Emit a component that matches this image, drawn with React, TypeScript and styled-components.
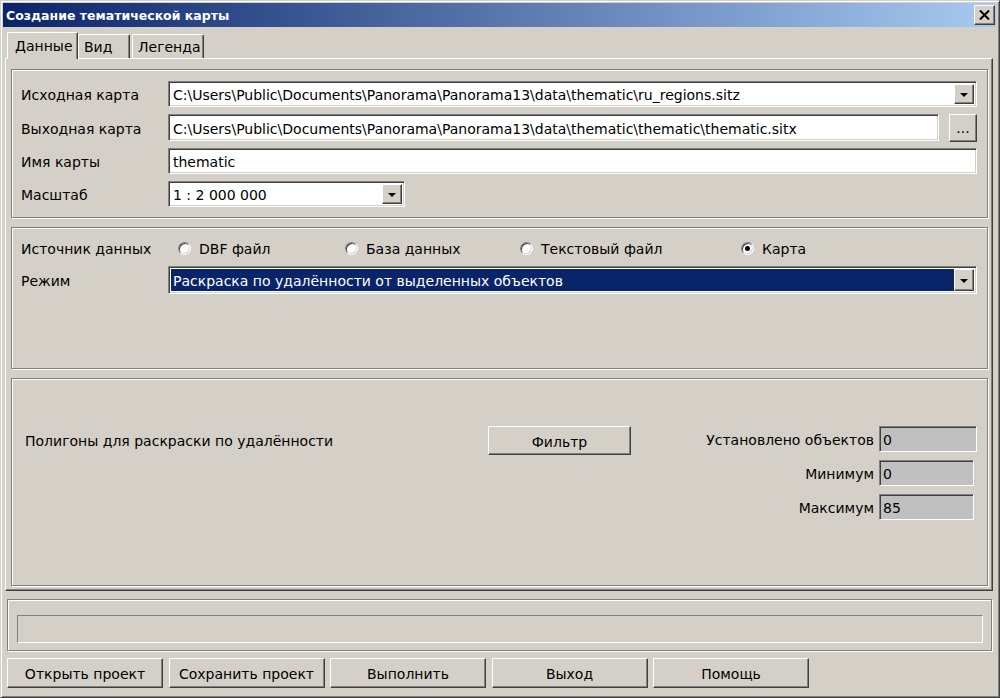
import styled, { createGlobalStyle } from "styled-components";

const GlobalStyle = createGlobalStyle`
  html, body { margin: 0; padding: 0; background: #d4d0c8; }
  body {
    font-family: "DejaVu Sans", Verdana, sans-serif;
    font-size: 14px;
    color: #000;
  }
  * { box-sizing: border-box; }
`;

const raised = `
  border: 1px solid;
  border-color: #fff #404040 #404040 #fff;
  box-shadow: inset -1px -1px 0 #808080, inset 1px 1px 0 #d4d0c8;
  background: #d4d0c8;
`;

const sunken = `
  border: 1px solid;
  border-color: #808080 #fff #fff #808080;
  box-shadow: inset 1px 1px 0 #404040, inset -1px -1px 0 #d4d0c8;
`;

const Window = styled.div`
  width: 1000px;
  height: 698px;
  background: #d4d0c8;
  border: 1px solid;
  border-color: #d4d0c8 #404040 #404040 #d4d0c8;
  box-shadow: inset 1px 1px 0 #fff, inset -1px -1px 0 #808080;
  padding: 2px 3px 0 2px;
  display: flex;
  flex-direction: column;
`;

const TitleBar = styled.div`
  height: 24px;
  display: flex;
  align-items: center;
  justify-content: space-between;
  background: linear-gradient(to right, #0a246a, #a6caf0);
  padding: 0 1px 0 3px;
`;

const TitleText = styled.span`
  color: #fff;
  font-weight: bold;
  font-size: 12.5px;
  padding-top: 1px;
`;

const CloseButton = styled.div`
  ${raised}
  width: 21px;
  height: 20px;
  display: flex;
  align-items: center;
  justify-content: center;
`;

const TabStrip = styled.div`
  margin-top: 5px;
  height: 26px;
  display: flex;
  align-items: flex-end;
  padding-left: 4px;
  position: relative;
  z-index: 1;
`;

const Tab = styled.div<{ $active?: boolean; $width: number; $pad: number }>`
  width: ${(p) => p.$width}px;
  height: ${(p) => (p.$active ? 27 : 24)}px;
  margin-bottom: ${(p) => (p.$active ? -1 : 0)}px;
  margin-right: ${(p) => (p.$active ? 0 : 2)}px;
  padding-left: ${(p) => p.$pad}px;
  padding-top: ${(p) => (p.$active ? 5 : 4)}px;
  background: #d4d0c8;
  border-top: 1px solid #fff;
  border-left: 1px solid #fff;
  border-right: 1px solid #404040;
  border-top-left-radius: 2px;
  border-top-right-radius: 2px;
  box-shadow: inset -1px 0 0 #808080;
  white-space: nowrap;
`;

const TabPage = styled.div`
  margin-left: 2px;
  width: 988px;
  height: 533px;
  border: 1px solid;
  border-color: #fff #404040 #404040 #fff;
  box-shadow: inset -1px -1px 0 #808080;
  padding: 10px 4px 0 5px;
  display: flex;
  flex-direction: column;
  gap: 9px;
`;

const Group = styled.div<{ $height: number }>`
  height: ${(p) => p.$height}px;
  border: 1px solid #808080;
  box-shadow: inset 1px 1px 0 #fff, 1px 1px 0 #fff;
`;

const FormGroup = styled(Group)`
  padding: 11px 10px 0 9px;
  display: flex;
  flex-direction: column;
  gap: 7px;
`;

const SourceGroup = styled(Group)`
  padding: 10px 10px 0 9px;
  display: flex;
  flex-direction: column;
  gap: 8px;
`;

const Row = styled.div<{ $height?: number }>`
  display: flex;
  align-items: center;
  height: ${(p) => p.$height ?? 26}px;
`;

const Label = styled.div`
  width: 147px;
  flex: none;
  padding-top: 2px;
  white-space: nowrap;
`;

const Field = styled.div<{ $width?: number }>`
  ${sunken}
  height: 100%;
  width: ${(p) => (p.$width ? `${p.$width}px` : "auto")};
  flex: ${(p) => (p.$width ? "none" : "1")};
  background: #fff;
  display: flex;
  align-items: stretch;
  padding: 2px;
  white-space: nowrap;
  overflow: hidden;
`;

const FieldText = styled.div<{ $selected?: boolean }>`
  flex: 1;
  display: flex;
  align-items: center;
  padding: 2px 0 0 2px;
  background: ${(p) => (p.$selected ? "#0a246a" : "transparent")};
  color: ${(p) => (p.$selected ? "#fff" : "#000")};
  overflow: hidden;
`;

const DropButton = styled.div`
  ${raised}
  width: 20px;
  flex: none;
  display: flex;
  align-items: center;
  justify-content: center;
`;

const Arrow = styled.div`
  width: 0;
  height: 0;
  border-left: 4px solid transparent;
  border-right: 4px solid transparent;
  border-top: 4px solid #000;
  margin-top: 1px;
`;

const EllipsisButton = styled.div`
  ${raised}
  width: 28px;
  height: 28px;
  margin-left: 10px;
  flex: none;
  display: flex;
  align-items: flex-end;
  justify-content: center;
  padding-bottom: 6px;
  line-height: 1;
`;

const RadioItem = styled.div<{ $width: number }>`
  width: ${(p) => p.$width}px;
  flex: none;
  display: flex;
  align-items: center;
  gap: 8px;
  white-space: nowrap;
  padding-top: 2px;
`;

const RadioCircle = styled.div<{ $checked?: boolean }>`
  width: 13px;
  height: 13px;
  margin-top: -2px;
  border-radius: 50%;
  border: 1px solid;
  border-color: #808080 #fff #fff #808080;
  box-shadow: inset 1px 1px 0 #404040, inset -1px -1px 0 #d4d0c8;
  background: #fff;
  display: flex;
  align-items: center;
  justify-content: center;

  &::after {
    content: "";
    display: ${(p) => (p.$checked ? "block" : "none")};
    width: 5px;
    height: 5px;
    border-radius: 50%;
    background: #000;
  }
`;

const FilterGroup = styled(Group)`
  padding: 47px 10px 0 13px;
  display: flex;
  align-items: flex-start;
`;

const LongLabel = styled.div`
  width: 463px;
  height: 29px;
  line-height: 31px;
  flex: none;
`;

const PushButton = styled.div<{ $width: number; $height: number }>`
  ${raised}
  width: ${(p) => p.$width}px;
  height: ${(p) => p.$height}px;
  flex: none;
  display: flex;
  align-items: center;
  justify-content: center;
  padding-top: 2px;
  white-space: nowrap;
`;

const Stats = styled.div`
  margin-left: auto;
  display: grid;
  grid-template-columns: auto auto;
  column-gap: 5px;
  row-gap: 8px;
`;

const StatLabel = styled.div`
  justify-self: end;
  height: 26px;
  line-height: 28px;
  white-space: nowrap;
`;

const StatField = styled.div<{ $width: number }>`
  width: ${(p) => p.$width}px;
  height: 26px;
  border: 1px solid;
  border-color: #808080 #fff #fff #808080;
  box-shadow: inset 1px 1px 0 #404040;
  background: #c0c0c0;
  padding-left: 3px;
  line-height: 26px;
`;

const ProgressGroup = styled(Group)`
  margin: 8px 0 0 4px;
  width: 985px;
  padding: 15px 0 0 9px;
`;

const ProgressField = styled.div`
  width: 966px;
  height: 28px;
  border: 1px solid;
  border-color: #808080 #fff #fff #808080;
`;

const ButtonBar = styled.div`
  margin: 7px 0 0 4px;
  display: flex;
  gap: 5.5px;
`;

function Combo({ text, width, selected }: { text: string; width?: number; selected?: boolean }) {
  return (
    <Field $width={width}>
      <FieldText $selected={selected}>{text}</FieldText>
      <DropButton>
        <Arrow />
      </DropButton>
    </Field>
  );
}

const radios = [
  { label: "DBF файл", width: 167 },
  { label: "База данных", width: 175 },
  { label: "Текстовый файл", width: 221 },
  { label: "Карта", width: 100, checked: true },
];

const buttons = ["Открыть проект", "Сохранить проект", "Выполнить", "Выход", "Помощь"];

export default function App() {
  return (
    <>
      <GlobalStyle />
      <Window>
        <TitleBar>
          <TitleText>Создание тематической карты</TitleText>
          <CloseButton>
            <svg width="11" height="10" viewBox="0 0 11 10">
              <path d="M1 0.5 L10 9.5 M10 0.5 L1 9.5" stroke="#000" strokeWidth="2" fill="none" />
            </svg>
          </CloseButton>
        </TitleBar>

        <TabStrip>
          <Tab $active $width={71} $pad={7}>Данные</Tab>
          <Tab $width={52} $pad={5}>Вид</Tab>
          <Tab $width={72} $pad={5}>Легенда</Tab>
        </TabStrip>

        <TabPage>
          <FormGroup $height={149}>
            <Row>
              <Label>Исходная карта</Label>
              <Combo text="C:\Users\Public\Documents\Panorama\Panorama13\data\thematic\ru_regions.sitz" />
            </Row>
            <Row $height={27}>
              <Label>Выходная карта</Label>
              <Field>
                <FieldText>C:\Users\Public\Documents\Panorama\Panorama13\data\thematic\thematic\thematic.sitx</FieldText>
              </Field>
              <EllipsisButton>...</EllipsisButton>
            </Row>
            <Row>
              <Label>Имя карты</Label>
              <Field>
                <FieldText>thematic</FieldText>
              </Field>
            </Row>
            <Row>
              <Label>Масштаб</Label>
              <Combo text="1 : 2 000 000" width={237} />
            </Row>
          </FormGroup>

          <SourceGroup $height={142}>
            <Row $height={20}>
              <Label>Источник данных</Label>
              <div style={{ width: 10 }} />
              {radios.map((r) => (
                <RadioItem key={r.label} $width={r.width}>
                  <RadioCircle $checked={r.checked} />
                  {r.label}
                </RadioItem>
              ))}
            </Row>
            <Row $height={28}>
              <Label>Режим</Label>
              <Combo text="Раскраска по удалённости от выделенных объектов" selected />
            </Row>
          </SourceGroup>

          <FilterGroup $height={208}>
            <LongLabel>Полигоны для раскраски по удалённости</LongLabel>
            <PushButton $width={143} $height={29}>Фильтр</PushButton>
            <Stats>
              <StatLabel>Установлено объектов</StatLabel>
              <StatField $width={98}>0</StatField>
              <StatLabel>Минимум</StatLabel>
              <StatField $width={95}>0</StatField>
              <StatLabel>Максимум</StatLabel>
              <StatField $width={95}>85</StatField>
            </Stats>
          </FilterGroup>
        </TabPage>

        <ProgressGroup $height={52}>
          <ProgressField />
        </ProgressGroup>

        <ButtonBar>
          {buttons.map((b) => (
            <PushButton key={b} $width={156} $height={30}>
              {b}
            </PushButton>
          ))}
        </ButtonBar>
      </Window>
    </>
  );
}
